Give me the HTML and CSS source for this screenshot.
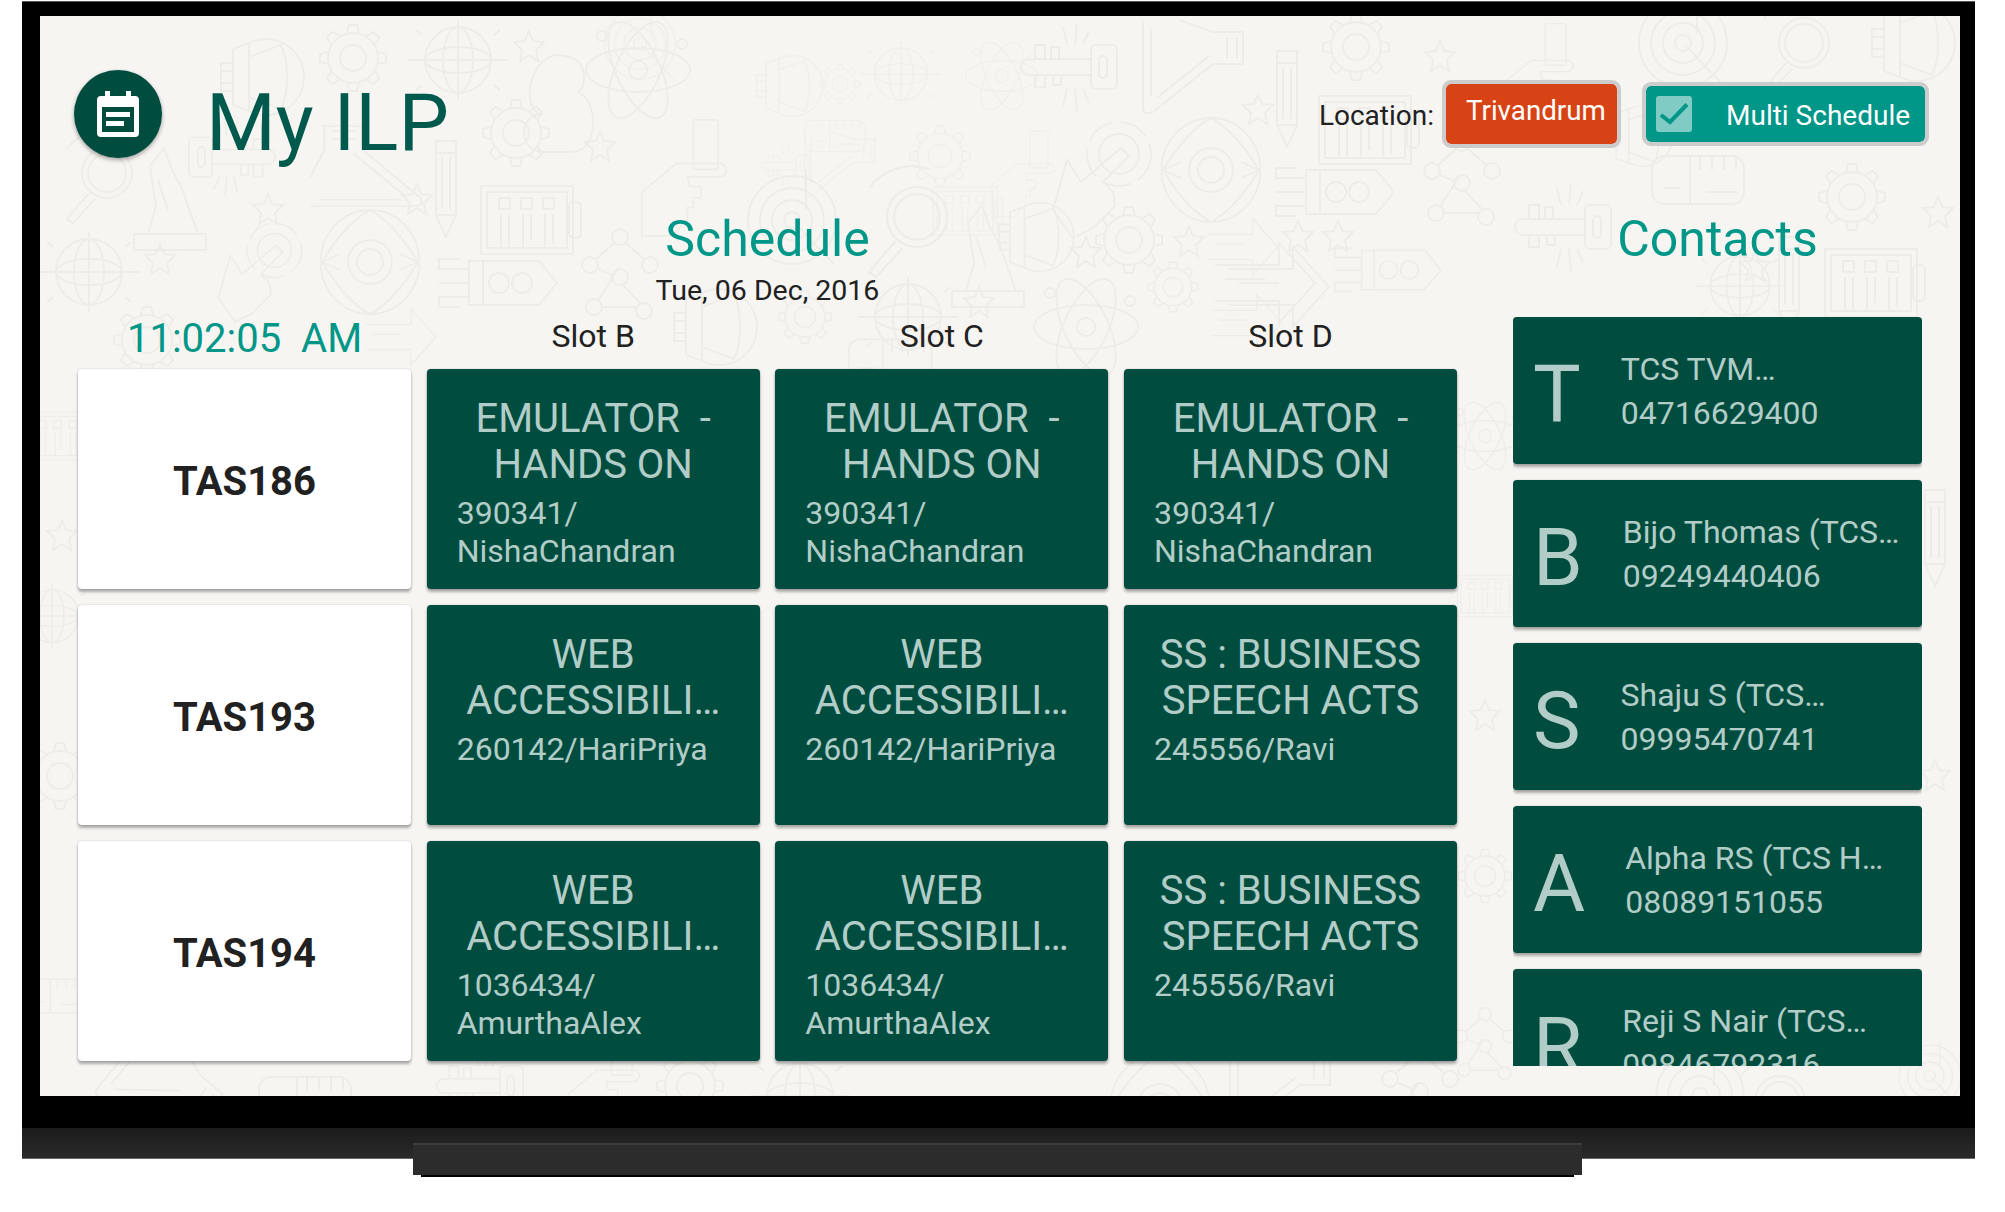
FILE: index.html
```html
<!DOCTYPE html>
<html>
<head>
    <meta charset="utf-8">
    <title>My ILP</title>
    <link rel="stylesheet" href="styles.css">
</head>

<body>

<div class="monitor">
    <div class="screen">
        <!-- Doodle wallpaper behind everything on the screen -->
        <svg class="wallpaper" width="1920" height="1080" viewBox="0 0 1920 1080">
            <defs>
                <g id="gear">
                    <circle r="25"/><circle r="13"/>
                    <path d="M-6-25-4-33H4L6-25"/>
                    <path d="M-6-25-4-33H4L6-25" transform="rotate(45)"/>
                    <path d="M-6-25-4-33H4L6-25" transform="rotate(90)"/>
                    <path d="M-6-25-4-33H4L6-25" transform="rotate(135)"/>
                    <path d="M-6-25-4-33H4L6-25" transform="rotate(180)"/>
                    <path d="M-6-25-4-33H4L6-25" transform="rotate(225)"/>
                    <path d="M-6-25-4-33H4L6-25" transform="rotate(270)"/>
                    <path d="M-6-25-4-33H4L6-25" transform="rotate(315)"/>
                </g>
                <g id="globe">
                    <circle r="33"/><ellipse rx="15" ry="33"/><ellipse rx="33" ry="13"/>
                    <path d="M-50 0H50M0-40V40M-42-30-36-25M42-30 36-25M-42 30-36 25M42 30 36 25"/>
                </g>
                <g id="atom">
                    <ellipse rx="52" ry="22"/>
                    <ellipse rx="52" ry="22" transform="rotate(65)"/>
                    <ellipse rx="52" ry="22" transform="rotate(115)"/>
                    <circle r="9"/><circle cx="44" cy="-26" r="5"/><circle cx="-36" cy="-34" r="5"/>
                </g>
                <path id="star" d="M0-16 4-6 15-5 7 3 9 14 0 8-9 14-7 3-15-5-4-6Z"/>
                <g id="bulb">
                    <path d="M-14-34A38 38 0 1 1-14 34"/>
                    <path d="M-14-34-30-28V28L-14 34Z"/>
                    <path d="M-14-20 18-32C26-16 26 16 18 32L-14 20Z"/>
                    <path d="M-30-14H-42V14H-30M-42-6H-30M-42 6H-30"/>
                </g>
                <g id="eye">
                    <circle r="52" transform="scale(.95 1)"/>
                    <path d="M-48 0C-30-30-12-46 0-52 12-46 30-30 48 0 30 30 12 46 0 52-12 46-30 30-48 0Z"/>
                    <circle r="22"/><circle r="13"/>
                    <path d="M-48 0-30-8M-48 0-30 8M48 0 30-8M48 0 30 8"/>
                </g>
                <g id="key">
                    <rect x="22" y="-22" width="26" height="44" rx="5"/>
                    <rect x="30" y="-11" width="8" height="22" rx="4"/>
                    <path d="M22-8H-40A8 8 0 0 0-40 8H22M-34-8V-22H-24V-8M-18-8V-20H-10V-8M-34 8V20H-24V8M-16 8V18H-8V8"/>
                    <path d="M-6-40-2-22M8-44 6-22M20-36 14-22M-6 40-2 22M8 44 6 22M20 36 14 22"/>
                </g>
                <g id="flask">
                    <path d="M-50-50V38C-50 44-44 44-40 42L20-6H50V-38H20L-14-50"/>
                    <path d="M-42-42V26M-36 28 16-14M34-32V-12M44-32V-12"/>
                </g>
                <g id="magnifier">
                    <circle r="25"/><circle r="19"/>
                    <path d="M-18 20-40 46-34 50-12 26M-40-24A44 44 0 0 1 10-40"/>
                </g>
                <g id="pencil">
                    <path d="M-10-46H10V28L0 50-10 28ZM-10 28H10M-10-34H10M-4-30V22M4-30V22"/>
                </g>
                <g id="panel">
                    <rect x="-46" y="-34" width="92" height="68"/>
                    <rect x="-40" y="-28" width="80" height="56"/>
                    <rect x="-28" y="-22" width="11" height="11"/><rect x="-6" y="-22" width="11" height="11"/><rect x="16" y="-22" width="11" height="11"/>
                    <path d="M-26-6V28M-18-6V28M-4-6V28M4-6V20M18-6V28M26-6V24"/>
                    <rect x="42" y="-18" width="12" height="36" rx="5"/>
                </g>
                <g id="rocket">
                    <path d="M-26-22H44L62 0 44 22H-26Z"/>
                    <circle cx="4" r="10"/><circle cx="27" r="10"/>
                    <path d="M-26-14H-56V-24H-36M-26 0H-56M-26 14H-56V24H-36M-12-22V22"/>
                </g>
                <g id="nodes">
                    <circle cx="0" cy="-40" r="8"/><circle cx="-30" cy="-12" r="8"/><circle cx="30" cy="-12" r="8"/><circle r="8"/><circle cx="-26" cy="30" r="8"/><circle cx="24" cy="34" r="8"/>
                    <path d="M-6-34-24-18M6-34 24-18M-2-8-22 24M3 8 20 26M-22-8-8-2M-18 30H16"/>
                </g>
                <g id="hand">
                    <path d="M-40 46V-2L-4-32H42A7 7 0 0 1 42-18H8L10-8H22V4H14V14H8V26L-8 44H-40"/>
                    <rect x="14" y="-78" width="26" height="52" rx="2"/>
                </g>
                <g id="touch">
                    <path d="M-42 20-28-30-14-8 26-42 34-34 8-8 18 2 20 16-2 38-22 48Z"/>
                    <circle cx="24" cy="-36" r="20"/><circle cx="24" cy="-36" r="32" stroke-dasharray="30 8"/>
                </g>
                <g id="cloud">
                    <path d="M-14 52C-40 52-40 16-18 14-40 4-24-52 6-44 30-42 30-14 20-8 42 2 40 52 14 52Z"/>
                </g>
                <g id="target">
                    <circle r="44"/><circle r="32"/><circle r="20"/><circle r="8"/>
                    <path d="M2 2 42 44M14-50V-10"/>
                </g>
                <g id="ruler">
                    <rect x="-46" y="-24" width="92" height="48" rx="12"/>
                    <path d="M-8-24V24M2-24V-10M14-24V-10M26-24V-10M38-24V-10M-34 8H-18M8 12H40"/>
                </g>
                <g id="arrow">
                    <path d="M-50-18H14V-40L50 0 14 40V18H-50M-40-4H0"/>
                </g>
                <g id="trophy">
                    <path d="M-36 50V34H36V50ZM-22 34 -14 6-20-34-6-52 2-30 12-12 20 12 28 34"/>
                    <path d="M-12-20-2 10"/>
                </g>
            </defs>

            <g class="doodles">
                <use href="#bulb" transform="translate(223 61)"/>
                <use href="#gear" transform="translate(313 42)"/>
                <use href="#globe" transform="translate(418 44)"/>
                <use href="#star" transform="translate(489 31)"/>
                <use href="#atom" transform="translate(598 54)"/>
                <use href="#cloud" transform="translate(518 84)"/>
                <use href="#gear" transform="translate(476 117)"/>
                <use href="#flask" transform="translate(330 150) rotate(-90) scale(.8 1.2)"/>
                <use href="#key" transform="translate(192 141) rotate(180) scale(.9)"/>
                <use href="#magnifier" transform="translate(67 157)"/>
                <use href="#trophy" transform="translate(130 184)"/>
                <use href="#pencil" transform="translate(406 171)"/>
                <use href="#star" transform="translate(560 131)"/>
                <use href="#panel" transform="translate(487 204)"/>
                <use href="#eye" transform="translate(330 246)"/>
                <use href="#globe" transform="translate(49 256)"/>
                <use href="#hand" transform="translate(640 178) scale(.95)"/>
                <use href="#gear" transform="translate(107 324)"/>
                <use href="#rocket" transform="translate(455 267)"/>
                <use href="#nodes" transform="translate(580 261)"/>
                <use href="#star" transform="translate(120 244)"/>
                <use href="#star" transform="translate(377 184)"/>
                <use href="#star" transform="translate(228 194)"/>
                <use href="#arrow" transform="translate(361 321) scale(.7)"/>
                <use href="#touch" transform="translate(214 265) scale(.85)"/>

                <use href="#target" transform="translate(600 28) scale(.8)" class="faint"/>
                <use href="#bulb" transform="translate(750 70) scale(.8)" class="faint"/>
                <use href="#gear" transform="translate(800 68) scale(.6)" class="faint"/>
                <use href="#globe" transform="translate(861 58) scale(.8)" class="faint"/>
                <use href="#atom" transform="translate(962 60) scale(.7)" class="faint"/>
                <use href="#key" transform="translate(1029 51)"/>
                <use href="#flask" transform="translate(1153 54)"/>
                <use href="#pencil" transform="translate(1247 81)"/>
                <use href="#star" transform="translate(1218 94)"/>
                <use href="#ruler" transform="translate(795 120) scale(.65)" class="faint"/>
                <use href="#flask" transform="translate(800 150) scale(.7)" class="faint"/>
                <use href="#key" transform="translate(745 150) scale(.5)" class="faint"/>
                <use href="#gear" transform="translate(900 140) scale(.9)" class="faint"/>
                <use href="#panel" transform="translate(925 195) scale(.7)" class="faint"/>
                <use href="#hand" transform="translate(980 170) scale(.7)" class="faint"/>
                <use href="#touch" transform="translate(1055 174)"/>
                <use href="#eye" transform="translate(1171 154)"/>
                <use href="#gear" transform="translate(1089 224)"/>
                <use href="#gear" transform="translate(1133 271) scale(.75)"/>
                <use href="#star" transform="translate(1149 226)"/>
                <use href="#star" transform="translate(1046 237)"/>
                <use href="#bulb" transform="translate(997 221) scale(.9)"/>
                <use href="#trophy" transform="translate(948 241)"/>
                <use href="#magnifier" transform="translate(877 201) scale(1.2)"/>
                <use href="#target" transform="translate(752 204)"/>
                <use href="#arrow" transform="translate(1203 231) scale(.7)"/>
                <use href="#arrow" transform="translate(1225 267)"/>
                <use href="#arrow" transform="translate(1207 307) scale(.7)"/>
                <use href="#atom" transform="translate(1046 311)"/>
                <use href="#globe" transform="translate(868 301)"/>
                <use href="#star" transform="translate(939 287)"/>
                <use href="#gear" transform="translate(765 301) scale(.8)"/>
                <use href="#bulb" transform="translate(676 311)"/>
                <use href="#ruler" transform="translate(850 345) scale(.9)"/>
                <use href="#star" transform="translate(1258 221)"/>

                <use href="#gear" transform="translate(1316 31)"/>
                <use href="#star" transform="translate(1400 41)"/>
                <use href="#hand" transform="translate(1494 70) scale(.8)"/>
                <use href="#target" transform="translate(1643 27)"/>
                <use href="#magnifier" transform="translate(1764 27)"/>
                <use href="#bulb" transform="translate(1874 27)"/>
                <use href="#panel" transform="translate(1325 114)"/>
                <use href="#rocket" transform="translate(1292 176)"/>
                <use href="#nodes" transform="translate(1422 167)"/>
                <use href="#ruler" transform="translate(1658 164)"/>
                <use href="#gear" transform="translate(1812 181)"/>
                <use href="#star" transform="translate(1898 197)"/>
                <use href="#star" transform="translate(1298 221)"/>
                <use href="#key" transform="translate(1523 211)"/>
                <use href="#rocket" transform="translate(1345 254) scale(.9)"/>
                <use href="#panel" transform="translate(1831 267)"/>
                <use href="#star" transform="translate(1715 251)"/>
                <use href="#pencil" transform="translate(1749 267)"/>
                <use href="#arrow" transform="translate(1239 271)"/>
                <use href="#bulb" transform="translate(1600 120) scale(.8)"/>
                <use href="#globe" transform="translate(1700 270) scale(.9)"/>

                <use href="#panel" transform="translate(18 420) scale(.7)"/>
                <use href="#globe" transform="translate(12 600) scale(.8)"/>
                <use href="#gear" transform="translate(20 760)"/>
                <use href="#ruler" transform="translate(16 980) scale(.7)"/>
                <use href="#star" transform="translate(22 520)"/>
                <use href="#atom" transform="translate(1445 420) scale(.7)"/>
                <use href="#panel" transform="translate(1445 580) scale(.6)"/>
                <use href="#star" transform="translate(1445 700)"/>
                <use href="#gear" transform="translate(1445 860) scale(.8)"/>
                <use href="#nodes" transform="translate(1445 1030) scale(.8)"/>
                <use href="#pencil" transform="translate(1895 520)"/>
                <use href="#star" transform="translate(1895 760)"/>
                <use href="#target" transform="translate(1890 1060) scale(.7)"/>

                <use href="#flask" transform="translate(120 1075) rotate(40)"/>
                <use href="#ruler" transform="translate(265 1085)"/>
                <use href="#key" transform="translate(440 1070) scale(.9)"/>
                <use href="#hand" transform="translate(560 1080) scale(.8)"/>
                <use href="#gear" transform="translate(650 1070)"/>
                <use href="#globe" transform="translate(760 1080)"/>
                <use href="#flask" transform="translate(1240 1075)"/>
                <use href="#nodes" transform="translate(1380 1075)"/>
                <use href="#target" transform="translate(1660 1080)"/>
                <use href="#magnifier" transform="translate(1740 1085)"/>
                <use href="#eye" transform="translate(1120 1090)"/>
            </g>
        </svg>

        <div class="header">
            <div class="logo">
                <svg width="42" height="46" viewBox="0 0 42 46">
                    <path fill="#fff" fill-rule="evenodd" d="M8 0H13V5H29V0H34V5H38A4 4 0 0 1 42 9V42A4 4 0 0 1 38 46H4A4 4 0 0 1 0 42V9A4 4 0 0 1 4 5H8ZM5 16V41H37V16ZM9 21H33V26H9ZM9 30H27V35H9Z"/>
                </svg>
            </div>
            <h1>My ILP</h1>
            <div class="tools">
                <span class="loc-label">Location:</span>
                <button class="btn btn-loc">Trivandrum</button>
                <button class="btn btn-multi">
                    <svg class="check" width="36" height="36" viewBox="0 0 36 36">
                        <rect width="36" height="36" rx="3" fill="#80cbc4"/>
                        <path d="M5 19 14 26 31 8.500" fill="none" stroke="#009688" stroke-width="4"/>
                    </svg>
                    Multi Schedule
                </button>
            </div>
        </div>

        <div class="main">
            <div class="schedule">
                <h2>Schedule</h2>
                <div class="date">Tue, 06 Dec, 2016</div>

                <div class="slots">
                    <div class="clock">11:02:05 &nbsp;AM</div>
                    <div>Slot B</div>
                    <div>Slot C</div>
                    <div>Slot D</div>
                </div>

                <div class="grid">
                    <div class="card room">TAS186</div>
                    <div class="card session">
                        <div class="topic">EMULATOR &nbsp;- HANDS ON</div>
                        <div class="teacher">390341/<wbr>NishaChandran</div>
                    </div>
                    <div class="card session">
                        <div class="topic">EMULATOR &nbsp;- HANDS ON</div>
                        <div class="teacher">390341/<wbr>NishaChandran</div>
                    </div>
                    <div class="card session">
                        <div class="topic">EMULATOR &nbsp;- HANDS ON</div>
                        <div class="teacher">390341/<wbr>NishaChandran</div>
                    </div>

                    <div class="card room">TAS193</div>
                    <div class="card session">
                        <div class="topic">WEB ACCESSIBILI…</div>
                        <div class="teacher">260142/HariPriya</div>
                    </div>
                    <div class="card session">
                        <div class="topic">WEB ACCESSIBILI…</div>
                        <div class="teacher">260142/HariPriya</div>
                    </div>
                    <div class="card session">
                        <div class="topic">SS : BUSINESS SPEECH ACTS</div>
                        <div class="teacher">245556/Ravi</div>
                    </div>

                    <div class="card room">TAS194</div>
                    <div class="card session">
                        <div class="topic">WEB ACCESSIBILI…</div>
                        <div class="teacher">1036434/<wbr>AmurthaAlex</div>
                    </div>
                    <div class="card session">
                        <div class="topic">WEB ACCESSIBILI…</div>
                        <div class="teacher">1036434/<wbr>AmurthaAlex</div>
                    </div>
                    <div class="card session">
                        <div class="topic">SS : BUSINESS SPEECH ACTS</div>
                        <div class="teacher">245556/Ravi</div>
                    </div>
                </div>
            </div>

            <div class="contacts">
                <h2>Contacts</h2>
                <div class="contact-list">
                    <div class="card contact">
                        <div class="initial">T</div>
                        <div><div>TCS TVM…</div><div>04716629400</div></div>
                    </div>
                    <div class="card contact">
                        <div class="initial">B</div>
                        <div><div>Bijo Thomas (TCS…</div><div>09249440406</div></div>
                    </div>
                    <div class="card contact">
                        <div class="initial">S</div>
                        <div><div>Shaju S (TCS…</div><div>09995470741</div></div>
                    </div>
                    <div class="card contact">
                        <div class="initial">A</div>
                        <div><div>Alpha RS (TCS H…</div><div>08089151055</div></div>
                    </div>
                    <div class="card contact">
                        <div class="initial">R</div>
                        <div><div>Reji S Nair (TCS…</div><div>09846792316</div></div>
                    </div>
                </div>
            </div>
        </div>
    </div>
</div>

<div class="base">
    <div class="stand"></div>
</div>

</body>
</html>
```

FILE: styles.css
```css
html, body { margin: 0; background: #fff; }
body { min-height: 1212px; font-family: Roboto, "Noto Sans", sans-serif; color: #212121; }
h1, h2 { margin: 0; font-weight: 400; }

/* Monitor frame */
.monitor { margin: 1px 30px 0 22px; padding: 14px 15px 32px 18px; background: #000; border-top: 1px solid #555; }
.screen { position: relative; width: 1920px; height: 1080px; background: #f6f5f2; overflow: hidden; }
.wallpaper { position: absolute; left: 0; top: 0; }
.doodles { fill: none; stroke: #edece8; stroke-width: 1.8; }
.faint { opacity: .6; }

.base { position: relative; margin: 0 30px 0 22px; height: 30px; background: linear-gradient(#1b1b1b, #2a2a2a); border-bottom: 1px solid #666; }
.stand { position: absolute; left: 391px; top: 15px; width: 1169px; height: 32px; background: #2c2c2c; border-top: 2px solid #3c3c3c; box-sizing: border-box; box-shadow: 0 10px 0 -8px #000; }

/* Header */
.header { position: relative; display: flex; height: 190px; box-sizing: border-box; padding: 54px 31px 0 34px; }
.logo { width: 88px; height: 88px; border-radius: 50%; background: #004d40; display: flex; align-items: center; justify-content: center; box-shadow: 0 2px 4px rgba(0,0,0,.35); }
h1 { margin: 9px 0 0 44px; font-size: 80px; line-height: 88px; color: #00594d; }
.tools { margin-left: auto; height: 88px; display: flex; align-items: flex-start; }
.loc-label { font-size: 28px; line-height: 34px; margin: 29px 8px 0 0; }
.btn { font-family: inherit; font-size: 28px; color: #fff; border: 4px solid #ccc; border-radius: 9px; box-sizing: border-box; display: flex; align-items: center; }
.btn-loc { width: 179px; height: 68px; margin: 10px 21px 0 0; padding: 0 0 8px 20px; font-size: 27.700px; background: #d84315; background-clip: padding-box; }
.btn-multi { width: 287px; height: 64px; margin-top: 12px; padding: 3px 0 0 10px; background: #009688; background-clip: padding-box; }
.check { margin: -3px 34px 0 0; }

/* Main area */
.main { position: relative; display: flex; gap: 56px; padding: 0 38px; }
.schedule { width: 1379px; }
.contacts { width: 409px; }
h2 { margin-top: 3px; font-size: 50px; line-height: 60px; color: #009688; text-align: center; }
.date { margin-top: 4px; font-size: 28.500px; line-height: 36px; text-align: center; }

.slots { display: grid; grid-template-columns: repeat(4, 333px); column-gap: 15.670px; height: 60px; padding-bottom: 9px; box-sizing: border-box; align-items: center; text-align: center; font-size: 32px; }
.clock { padding-top: 6px; font-size: 40px; color: #009688; }

.grid { display: grid; grid-template-columns: repeat(4, 333px); grid-auto-rows: 220px; gap: 16px 15.670px; }
.card { border-radius: 4px; box-shadow: 0 3px 3px rgba(0,0,0,.3), 0 0 2px rgba(0,0,0,.2); box-sizing: border-box; }
.room { background: #fff; display: flex; align-items: center; justify-content: center; padding-top: 4px; font-size: 40px; font-weight: 700; }
.session { background: #004d40; color: #b2ccc7; padding: 27px 30px 0; }
.topic { font-size: 40px; line-height: 46px; text-align: center; }
.teacher { margin-top: 6px; font-size: 32px; line-height: 38px; }

/* Contacts */
.contact-list { margin-top: 48px; height: 749px; overflow: hidden; }
.contact { height: 147px; margin-bottom: 16px; background: #004d40; color: #b2ccc7; display: flex; align-items: center; gap: 40px; padding-left: 20px; font-size: 32px; line-height: 44px; }
.initial { padding-top: 8px; font-size: 80px; line-height: 92px; }
```
